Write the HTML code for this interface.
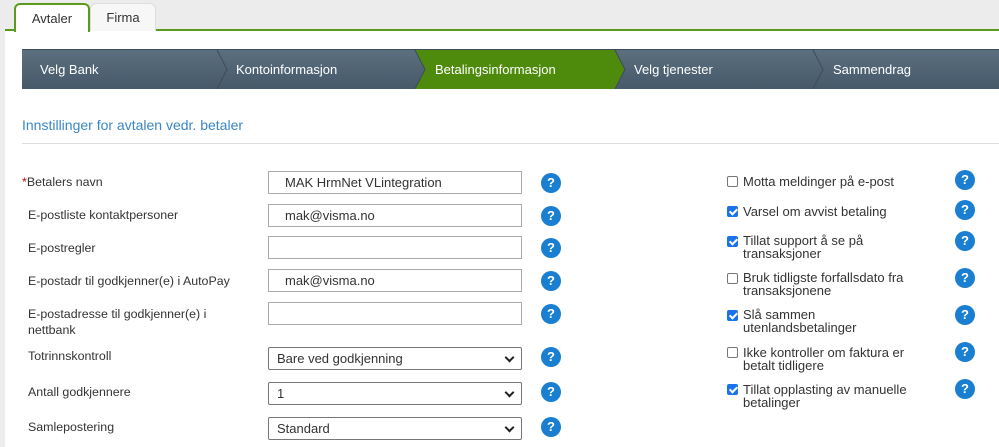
<!DOCTYPE html>
<html><head><meta charset="utf-8"><style>
*{box-sizing:border-box;margin:0;padding:0}
html,body{width:999px;height:447px;overflow:hidden}
body{background:#ececec;font-family:"Liberation Sans",sans-serif;font-size:13px;color:#333;position:relative}
.a{position:absolute;white-space:nowrap}
.panel{position:absolute;left:5px;top:29px;width:994px;height:418px;background:#fff;border-top:2px solid #5a9a1c}
.tab{position:absolute;top:3px;height:28px;border:1px solid #ddd;border-bottom:none;border-radius:6px 6px 0 0;background:#f7f7f7;text-align:center;line-height:28px;font-size:13px;color:#333}
.t1{left:14px;width:76px;background:#fff;border:2px solid #5a9a1c;border-bottom:none;height:29px;z-index:2}
.t2{left:90px;width:66px}
.nav{position:absolute;left:22px;top:49px;width:977px;height:40px;background:linear-gradient(#5b6f7f,#46596a);border-top:1px solid #3e4e5c}
.step{position:absolute;top:0;height:39px;line-height:39px;color:#fff;font-size:13px}
.lbl{position:absolute;left:28px;font-size:12.4px;color:#333;line-height:16px}
.inp{position:absolute;left:268px;width:254px;height:23px;border:1px solid #aaa;padding-left:16px;line-height:21px;font-size:13px;color:#333}
.sel{position:absolute;left:268px;width:254px;height:23px;border:1px solid #777;border-radius:2px;padding-left:8px;line-height:21px;font-size:13px}
.sel:after{content:"";position:absolute;right:8px;top:6px;width:5px;height:5px;border-right:2px solid #222;border-bottom:2px solid #222;transform:rotate(45deg)}
.q{position:absolute;width:20px;height:20px;border-radius:50%;background:#1a7fd0;color:#fff;font-weight:bold;font-size:13px;text-align:center;line-height:20px}
.cb{position:absolute;left:727px;width:11px;height:11px;border:1px solid #777;border-radius:2px;background:#fff}
.cb.on{background:#1a73e8;border-color:#1a73e8}
.cb.on:after{content:"";position:absolute;left:3px;top:0px;width:3px;height:6px;border-right:2px solid #fff;border-bottom:2px solid #fff;transform:rotate(45deg)}
.rt{position:absolute;left:743px;font-size:13px;line-height:12.5px;color:#333}
</style></head><body>
<div class="panel"></div>
<div class="tab t1">Avtaler</div>
<div class="tab t2">Firma</div>
<div class="nav">
<svg width="977" height="39" style="position:absolute;left:0;top:0">
<polygon points="393,0 593,0 603,19.5 593,39 393,39 403,19.5" fill="#4e8a0c"/>
<polyline points="195,0 205,19.5 195,39" fill="none" stroke="#3c4c5a"/>
<polyline points="393,0 403,19.5 393,39" fill="none" stroke="#3c4c5a"/>
<polyline points="593,0 603,19.5 593,39" fill="none" stroke="#3c4c5a"/>
<polyline points="791,0 801,19.5 791,39" fill="none" stroke="#3c4c5a"/>
</svg>
<div class="step" style="left:18px">Velg Bank</div>
<div class="step" style="left:214px">Kontoinformasjon</div>
<div class="step" style="left:413px">Betalingsinformasjon</div>
<div class="step" style="left:612px">Velg tjenester</div>
<div class="step" style="left:811px">Sammendrag</div>
</div>
<div class="a" style="left:22px;top:117px;font-size:14px;color:#3a87c8">Innstillinger for avtalen vedr. betaler</div>
<div class="a" style="left:22px;top:143px;width:977px;height:1px;background:#ddd"></div>

<div class="lbl" style="left:22px;top:174px"><span style="color:#c00">*</span>Betalers navn</div>
<div class="lbl" style="top:207px">E-postliste kontaktpersoner</div>
<div class="lbl" style="top:240px">E-postregler</div>
<div class="lbl" style="top:273px">E-postadr til godkjenner(e) i AutoPay</div>
<div class="lbl" style="top:306px">E-postadresse til godkjenner(e) i<br>nettbank</div>
<div class="lbl" style="top:348px">Totrinnskontroll</div>
<div class="lbl" style="top:384px">Antall godkjennere</div>
<div class="lbl" style="top:419px">Samlepostering</div>

<div class="inp" style="top:171px">MAK HrmNet VLintegration</div>
<div class="inp" style="top:204px">mak@visma.no</div>
<div class="inp" style="top:236px"></div>
<div class="inp" style="top:269px">mak@visma.no</div>
<div class="inp" style="top:302px"></div>
<div class="sel" style="top:347px">Bare ved godkjenning</div>
<div class="sel" style="top:382px">1</div>
<div class="sel" style="top:417px">Standard</div>

<div class="q" style="left:541px;top:173px">?</div>
<div class="q" style="left:541px;top:206px">?</div>
<div class="q" style="left:541px;top:238px">?</div>
<div class="q" style="left:541px;top:271px">?</div>
<div class="q" style="left:541px;top:304px">?</div>
<div class="q" style="left:541px;top:347px">?</div>
<div class="q" style="left:541px;top:382px">?</div>
<div class="q" style="left:541px;top:417px">?</div>

<div class="cb" style="top:176px"></div><div class="rt" style="top:176px">Motta meldinger på e-post</div>
<div class="cb on" style="top:206px"></div><div class="rt" style="top:206px">Varsel om avvist betaling</div>
<div class="cb on" style="top:236px"></div><div class="rt" style="top:235px">Tillat support å se på<br>transaksjoner</div>
<div class="cb" style="top:273px"></div><div class="rt" style="top:272px">Bruk tidligste forfallsdato fra<br>transaksjonene</div>
<div class="cb on" style="top:310px"></div><div class="rt" style="top:309px">Slå sammen<br>utenlandsbetalinger</div>
<div class="cb" style="top:347px"></div><div class="rt" style="top:347px">Ikke kontroller om faktura er<br>betalt tidligere</div>
<div class="cb on" style="top:384px"></div><div class="rt" style="top:384px">Tillat opplasting av manuelle<br>betalinger</div>

<div class="q" style="left:955px;top:170px">?</div>
<div class="q" style="left:955px;top:200px">?</div>
<div class="q" style="left:955px;top:231px">?</div>
<div class="q" style="left:955px;top:268px">?</div>
<div class="q" style="left:955px;top:305px">?</div>
<div class="q" style="left:955px;top:342px">?</div>
<div class="q" style="left:955px;top:379px">?</div>
</body></html>
